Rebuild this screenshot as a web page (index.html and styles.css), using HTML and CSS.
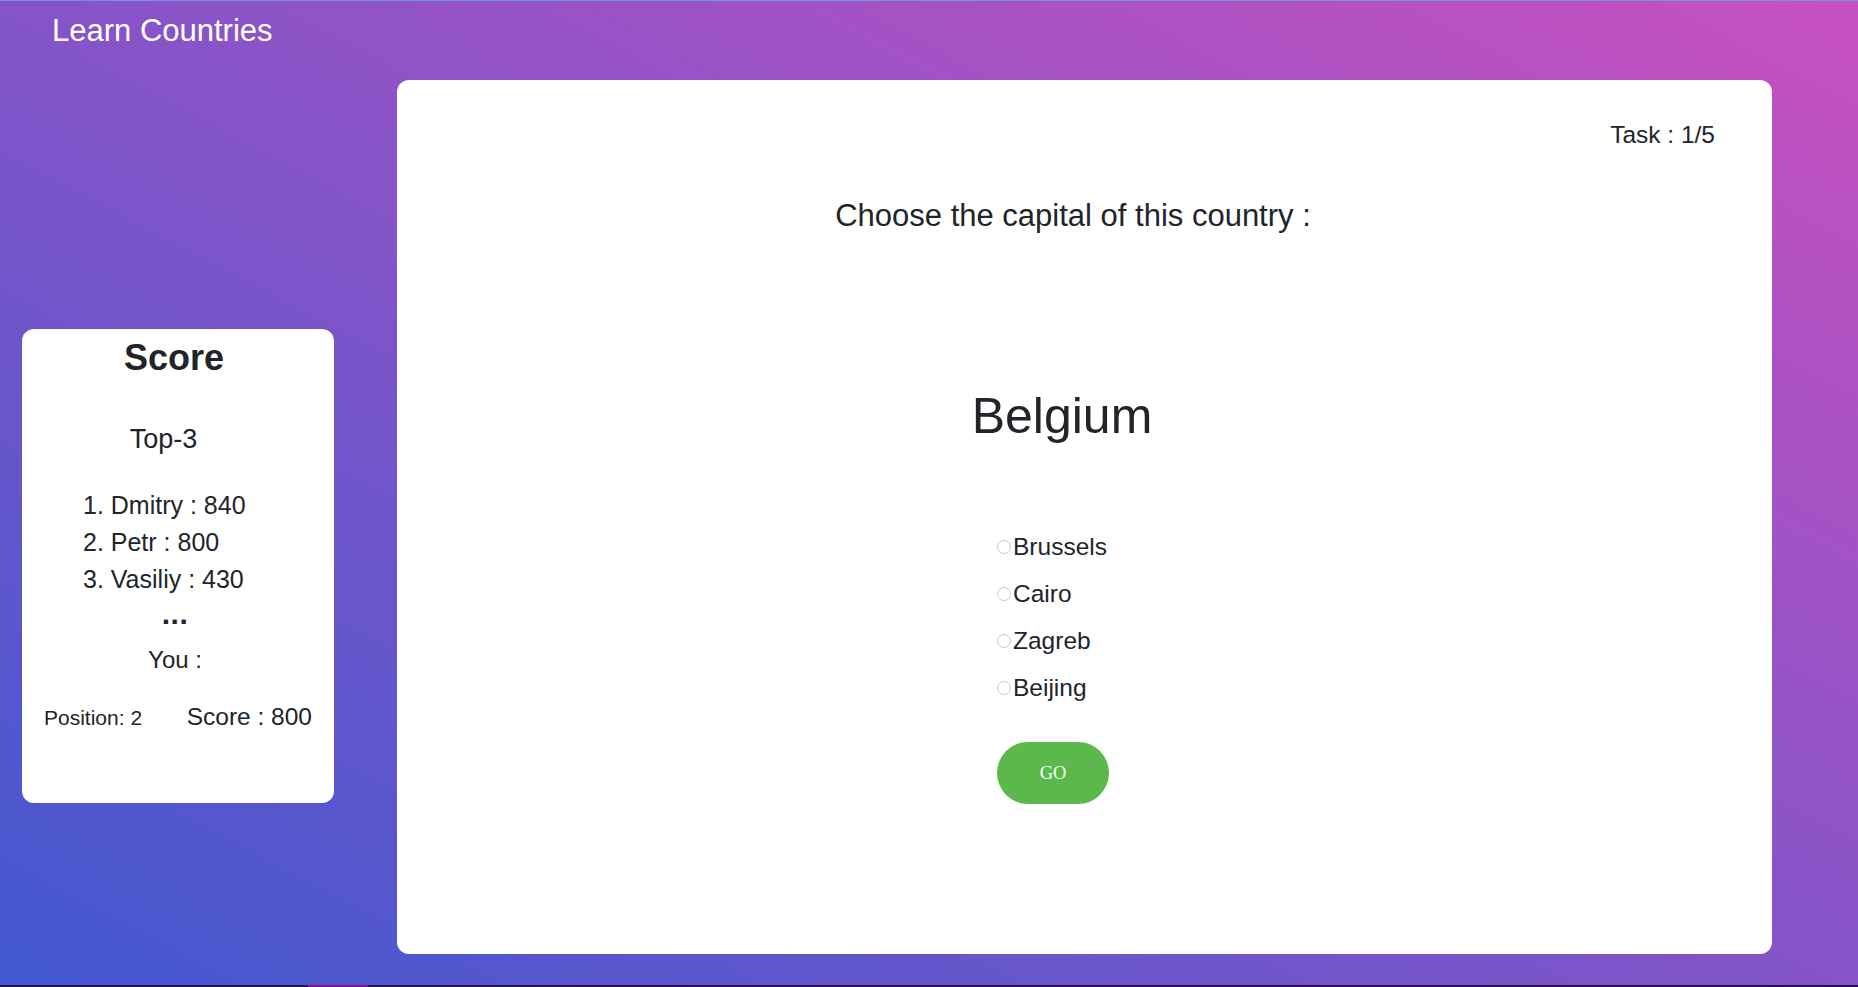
FILE: index.html
```html
<!DOCTYPE html>
<html lang="en">
<head>
<meta charset="utf-8">
<title>Learn Countries</title>
<link rel="stylesheet" href="styles.css">
</head>
<body>
<div class="page">
  <header class="topbar">Learn Countries</header>
  <div class="layout">
    <aside class="score-card">
      <h2 class="score-title">Score</h2>
      <div class="top-title">Top-3</div>
      <ol class="top-list">
        <li>1. Dmitry : 840</li>
        <li>2. Petr : 800</li>
        <li>3. Vasiliy : 430</li>
      </ol>
      <div class="dots">...</div>
      <div class="you">You :</div>
      <div class="you-row">
        <span class="you-pos">Position: 2</span>
        <span class="you-score">Score : 800</span>
      </div>
    </aside>
    <main class="quiz-card">
      <div class="task">Task : 1/5</div>
      <div class="question">Choose the capital of this country :</div>
      <div class="country">Belgium</div>
      <form class="answers">
        <label class="answer"><input type="radio" name="cap" class="radio">Brussels</label>
        <label class="answer"><input type="radio" name="cap" class="radio">Cairo</label>
        <label class="answer"><input type="radio" name="cap" class="radio">Zagreb</label>
        <label class="answer"><input type="radio" name="cap" class="radio">Beijing</label>
        <button type="button" class="go-btn">GO</button>
      </form>
    </main>
  </div>
</div>
<div class="footer-strip"><span class="footer-seg"></span></div>
</body>
</html>
```
FILE: styles.css
```css
html, body {
  margin: 0;
  padding: 0;
}
body {
  width: 1858px;
  height: 987px;
  overflow: hidden;
  font-family: "Liberation Sans", Arial, sans-serif;
  color: #212529;
}
.page {
  box-sizing: border-box;
  height: 985px;
  border-top: 1px solid #6c97e2;
  background: linear-gradient(to top right, #4158d0, #c850c0);
}
.topbar {
  padding: 12px 0 0 52px;
  font-size: 31px;
  line-height: 36px;
  color: #ffffff;
}
.layout {
  display: flex;
  align-items: flex-start;
  gap: 63px;
  margin-top: 31px;
  padding-left: 22px;
}
.score-card {
  box-sizing: border-box;
  width: 312px;
  height: 474px;
  margin-top: 249px;
  padding-top: 8px;
  background: #ffffff;
  border-radius: 12px;
  text-align: center;
}
.score-title {
  margin: 0;
  padding-right: 8px;
  font-size: 36px;
  line-height: 42px;
  font-weight: bold;
}
.top-title {
  margin-top: 45px;
  padding-right: 29px;
  font-size: 27px;
  line-height: 31px;
}
.top-list {
  list-style: none;
  margin: 32px 0 0;
  padding: 0 0 0 61px;
  text-align: left;
  font-size: 25px;
  line-height: 37px;
}
.dots {
  margin-top: 0;
  padding-right: 6px;
  font-size: 30px;
  line-height: 32px;
  font-weight: bold;
  letter-spacing: 0.5px;
}
.you {
  margin-top: 16px;
  padding-right: 6px;
  font-size: 24px;
  line-height: 28px;
}
.you-row {
  display: flex;
  justify-content: space-between;
  align-items: baseline;
  margin-top: 28px;
  padding: 0 22px;
  line-height: 30px;
}
.you-pos {
  font-size: 21px;
}
.you-score {
  font-size: 24.5px;
}
.quiz-card {
  box-sizing: border-box;
  width: 1375px;
  height: 874px;
  padding-top: 41px;
  background: #ffffff;
  border-radius: 12px;
}
.task {
  padding-right: 57px;
  text-align: right;
  font-size: 24.5px;
  line-height: 28px;
}
.question {
  margin-top: 49px;
  padding-right: 23px;
  text-align: center;
  font-size: 31px;
  line-height: 36px;
}
.country {
  margin-top: 154px;
  padding-right: 45px;
  text-align: center;
  font-size: 50px;
  line-height: 56px;
}
.answers {
  display: flex;
  flex-direction: column;
  align-items: flex-start;
  gap: 19px;
  margin: 89px 0 0 600px;
}
.answer {
  display: flex;
  align-items: center;
  font-size: 24.5px;
  line-height: 28px;
  cursor: pointer;
}
.radio {
  -webkit-appearance: none;
  appearance: none;
  box-sizing: border-box;
  width: 14px;
  height: 14px;
  margin: 0 2px 0 0;
  border: 1px solid #cccccc;
  border-radius: 50%;
  background: #ffffff;
}
.go-btn {
  margin-top: 21px;
  width: 112px;
  height: 62px;
  border: none;
  border-radius: 31px;
  background: #5bb84b;
  color: #ffffff;
  font-family: "Liberation Serif", "Times New Roman", serif;
  font-size: 18.5px;
  padding: 0;
  cursor: pointer;
}
.footer-strip {
  display: flex;
  height: 2px;
  background: #2d0f4c;
}
.footer-seg {
  width: 60px;
  margin-left: 308px;
  background: #80197f;
}
```
